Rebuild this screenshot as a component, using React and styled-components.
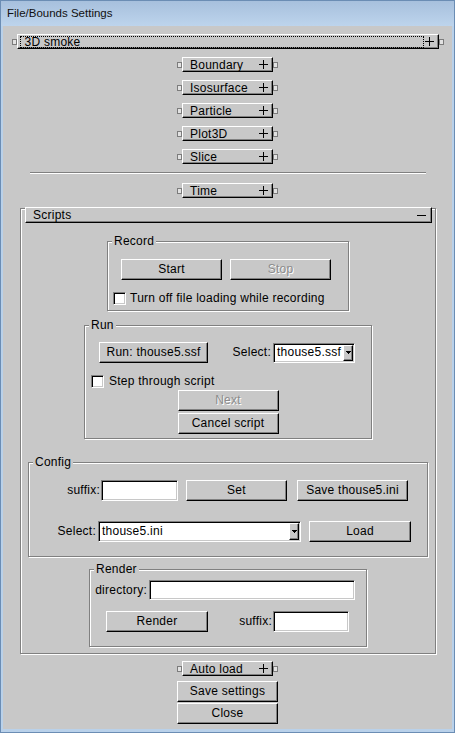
import React from 'react';
import styled, { createGlobalStyle, css } from 'styled-components';

const BG = '#c8c8c8';

const GlobalStyle = createGlobalStyle`
  html, body {
    margin: 0;
    padding: 0;
    background: ${BG};
  }
  body {
    font-family: "Liberation Sans", Arial, sans-serif;
    font-size: 12px;
    line-height: 13px;
    letter-spacing: 0.25px;
    color: #000;
  }
  *, *::before, *::after {
    box-sizing: border-box;
  }
`;

/* GLUI style bevels */
const raised = css`
  background: ${BG};
  border: 1px solid;
  border-color: #fff #000 #000 #fff;
  box-shadow: inset -1px -1px 0 #808080;
`;

const sunken = css`
  background: #fff;
  border: 1px solid;
  border-color: #808080 #fff #fff #808080;
  box-shadow: inset 1px 1px 0 #000, inset -1px -1px 0 ${BG};
`;

const Window = styled.div`
  width: 455px;
  height: 733px;
  display: flex;
  flex-direction: column;
  background: #b9d1ea;
  border: 1px solid #6b8db4;
`;

const TitleBar = styled.div`
  height: 25px;
  flex-shrink: 0;
  display: flex;
  align-items: center;
  padding-left: 6px;
  background: linear-gradient(to bottom, #a7c0dd, #bdd4ec);
  font-size: 11.5px;
  letter-spacing: 0;
  color: #111;
`;

const Body = styled.div`
  flex: 1;
  margin: 0 2px 3px;
  background: ${BG};
  display: flex;
  flex-direction: column;
  align-items: center;
  padding-top: 8px;
`;

const RolloutRow = styled.div`
  display: flex;
  align-items: center;
  margin-top: ${p => p.$mt || 0}px;
`;

const Handle = styled.span`
  width: 5px;
  height: 6px;
  border: 1px solid #7c7c7c;
  background: #e2e2e2;
`;

const RollButton = styled.div`
  ${raised}
  width: ${p => p.$w}px;
  height: 15px;
  display: flex;
  align-items: center;
  padding: 0 4px 0 ${p => (p.$focus ? 2 : 7)}px;
`;

const RollLabel = styled.span`
  flex: 1;
  line-height: 12px;
  height: 12px;
  ${p => p.$focus && css`
    border: 1px dotted #000;
    padding-left: 4px;
    line-height: 10px;
    margin-right: 1px;
  `}
`;

const Separator = styled.div`
  width: 396px;
  height: 2px;
  margin-top: 8px;
  border-top: 1px solid #808080;
  border-bottom: 1px solid #fff;
`;

const Panel = styled.div`
  align-self: stretch;
  margin: 10px 16px 0 17px;
  border: 1px solid #808080;
  box-shadow: inset 1px 1px 0 #fff, 1px 1px 0 #fff;
  display: flex;
  flex-direction: column;
  align-items: center;
  padding-bottom: 6px;
`;

const PanelHeader = styled.div`
  ${raised}
  align-self: stretch;
  margin: -2px 3px 0 4px;
  height: 16px;
  display: flex;
  align-items: center;
  padding: 0 5px 0 7px;
`;

const GroupBox = styled.div`
  position: relative;
  width: ${p => p.$w}px;
  margin-top: ${p => p.$mt}px;
  padding: ${p => p.$pad};
  border: 1px solid #808080;
  box-shadow: inset 1px 1px 0 #fff, 1px 1px 0 #fff;
  display: flex;
  flex-direction: column;
`;

const Legend = styled.span`
  position: absolute;
  top: -8px;
  left: 4px;
  padding: 0 2px;
  line-height: 14px;
  background: ${BG};
`;

const Row = styled.div`
  display: flex;
  align-items: center;
  margin-top: ${p => p.$mt || 0}px;
  margin-left: ${p => p.$ml || 0}px;
  align-self: ${p => (p.$center ? 'center' : 'flex-start')};
`;

const Button = styled.button`
  ${raised}
  font: inherit;
  letter-spacing: inherit;
  padding: 0;
  width: ${p => p.$w || 101}px;
  height: 21px;
  line-height: 19px;
  text-align: center;
  flex-shrink: 0;
  margin-left: ${p => p.$ml || 0}px;
  margin-top: ${p => p.$mt || 0}px;
  color: ${p => (p.disabled ? '#8c8c8c' : '#000')};
  text-shadow: ${p => (p.disabled ? '1px 1px 0 #fff' : 'none')};
`;

const FieldLabel = styled.span`
  width: ${p => p.$w}px;
  text-align: right;
  padding-right: ${p => p.$pr ?? 1}px;
  white-space: nowrap;
  flex-shrink: 0;
`;

const TextInput = styled.input`
  ${sunken}
  width: ${p => p.$w}px;
  height: ${p => p.$h || 21}px;
  font: inherit;
  padding: 0 3px;
  outline: none;
  flex-shrink: 0;
`;

const Listbox = styled.div`
  ${sunken}
  width: ${p => p.$w}px;
  height: ${p => p.$h}px;
  margin-left: ${p => p.$ml || 0}px;
  display: flex;
  padding: 1px;
  flex-shrink: 0;
`;

const ListText = styled.span`
  flex: 1;
  padding-left: 2px;
  display: flex;
  align-items: center;
  white-space: nowrap;
  overflow: hidden;
`;

const ListArrow = styled.span`
  ${raised}
  width: 10px;
  display: flex;
  align-items: center;
  justify-content: center;
`;

const CheckRow = styled.label`
  display: flex;
  align-items: center;
  height: 13px;
  margin-top: ${p => p.$mt || 0}px;
  margin-left: ${p => p.$ml || 0}px;
`;

const CheckBox = styled.span`
  ${sunken}
  width: 13px;
  height: 13px;
  flex-shrink: 0;
  margin-right: ${p => p.$gap || 4}px;
`;

const PlusIcon = () => (
  <svg width="9" height="9" viewBox="0 0 9 9" shapeRendering="crispEdges">
    <path d="M4.5 0v9M0 4.5h9" stroke="#000" strokeWidth="1" />
  </svg>
);

const MinusIcon = () => (
  <svg width="9" height="9" viewBox="0 0 9 9" shapeRendering="crispEdges">
    <path d="M0 4.5h9" stroke="#000" strokeWidth="1" />
  </svg>
);

const DownArrow = () => (
  <svg width="5" height="3" viewBox="0 0 5 3" shapeRendering="crispEdges">
    <path d="M0 0h5L2.5 3z" fill="#000" />
  </svg>
);

const Rollout = ({ label, width = 91, mt, focus }) => (
  <RolloutRow $mt={mt}>
    <Handle />
    <RollButton $w={width} $focus={focus}>
      <RollLabel $focus={focus}>{label}</RollLabel>
      <PlusIcon />
    </RollButton>
    <Handle />
  </RolloutRow>
);

const Select = ({ value, w, h, ml }) => (
  <Listbox $w={w} $h={h} $ml={ml}>
    <ListText>{value}</ListText>
    <ListArrow>
      <DownArrow />
    </ListArrow>
  </Listbox>
);

export default function App() {
  return (
    <>
      <GlobalStyle />
      <Window>
        <TitleBar>File/Bounds Settings</TitleBar>
        <Body>
          <Rollout label="3D smoke" width={422} focus />
          <Rollout label="Boundary" mt={8} />
          <Rollout label="Isosurface" mt={8} />
          <Rollout label="Particle" mt={8} />
          <Rollout label="Plot3D" mt={8} />
          <Rollout label="Slice" mt={8} />
          <Separator />
          <Rollout label="Time" mt={9} />

          <Panel>
            <PanelHeader>
              <RollLabel>Scripts</RollLabel>
              <MinusIcon />
            </PanelHeader>

            <GroupBox $w={242} $mt={18} $pad="17px 0 5px 0">
              <Legend>Record</Legend>
              <Row $ml={13}>
                <Button>Start</Button>
                <Button $ml={8} disabled>Stop</Button>
              </Row>
              <CheckRow $mt={12} $ml={5}>
                <CheckBox />
                Turn off file loading while recording
              </CheckRow>
            </GroupBox>

            <GroupBox $w={288} $mt={14} $pad="16px 0 4px 0">
              <Legend>Run</Legend>
              <Row $ml={14}>
                <Button $w={109}>Run: thouse5.ssf</Button>
                <FieldLabel $w={65} $pr={2}>Select:</FieldLabel>
                <Select value="thouse5.ssf" w={82} h={20} />
              </Row>
              <CheckRow $mt={12} $ml={6}>
                <CheckBox $gap={5} />
                Step through script
              </CheckRow>
              <Row $mt={2} $center>
                <Button disabled>Next</Button>
              </Row>
              <Row $mt={2} $center>
                <Button>Cancel script</Button>
              </Row>
            </GroupBox>

            <GroupBox $w={400} $mt={23} $pad="17px 0 14px 0">
              <Legend>Config</Legend>
              <Row>
                <FieldLabel $w={72}>suffix:</FieldLabel>
                <TextInput $w={77} />
                <Button $ml={8}>Set</Button>
                <Button $w={111} $ml={10}>Save thouse5.ini</Button>
              </Row>
              <Row $mt={20}>
                <FieldLabel $w={69} $pr={2}>Select:</FieldLabel>
                <Select value="thouse5.ini" w={203} h={21} />
                <Button $w={102} $ml={8}>Load</Button>
              </Row>
            </GroupBox>

            <GroupBox $w={278} $mt={12} $pad="10px 0 14px 0">
              <Legend>Render</Legend>
              <Row>
                <FieldLabel $w={59} $pr={2}>directory:</FieldLabel>
                <TextInput $w={206} $h={20} />
              </Row>
              <Row $mt={11}>
                <Button $w={102} $ml={16}>Render</Button>
                <FieldLabel $w={65}>suffix:</FieldLabel>
                <TextInput $w={76} />
              </Row>
            </GroupBox>
          </Panel>

          <Rollout label="Auto load" mt={7} />
          <Button $mt={5}>Save settings</Button>
          <Button $mt={1}>Close</Button>
        </Body>
      </Window>
    </>
  );
}
